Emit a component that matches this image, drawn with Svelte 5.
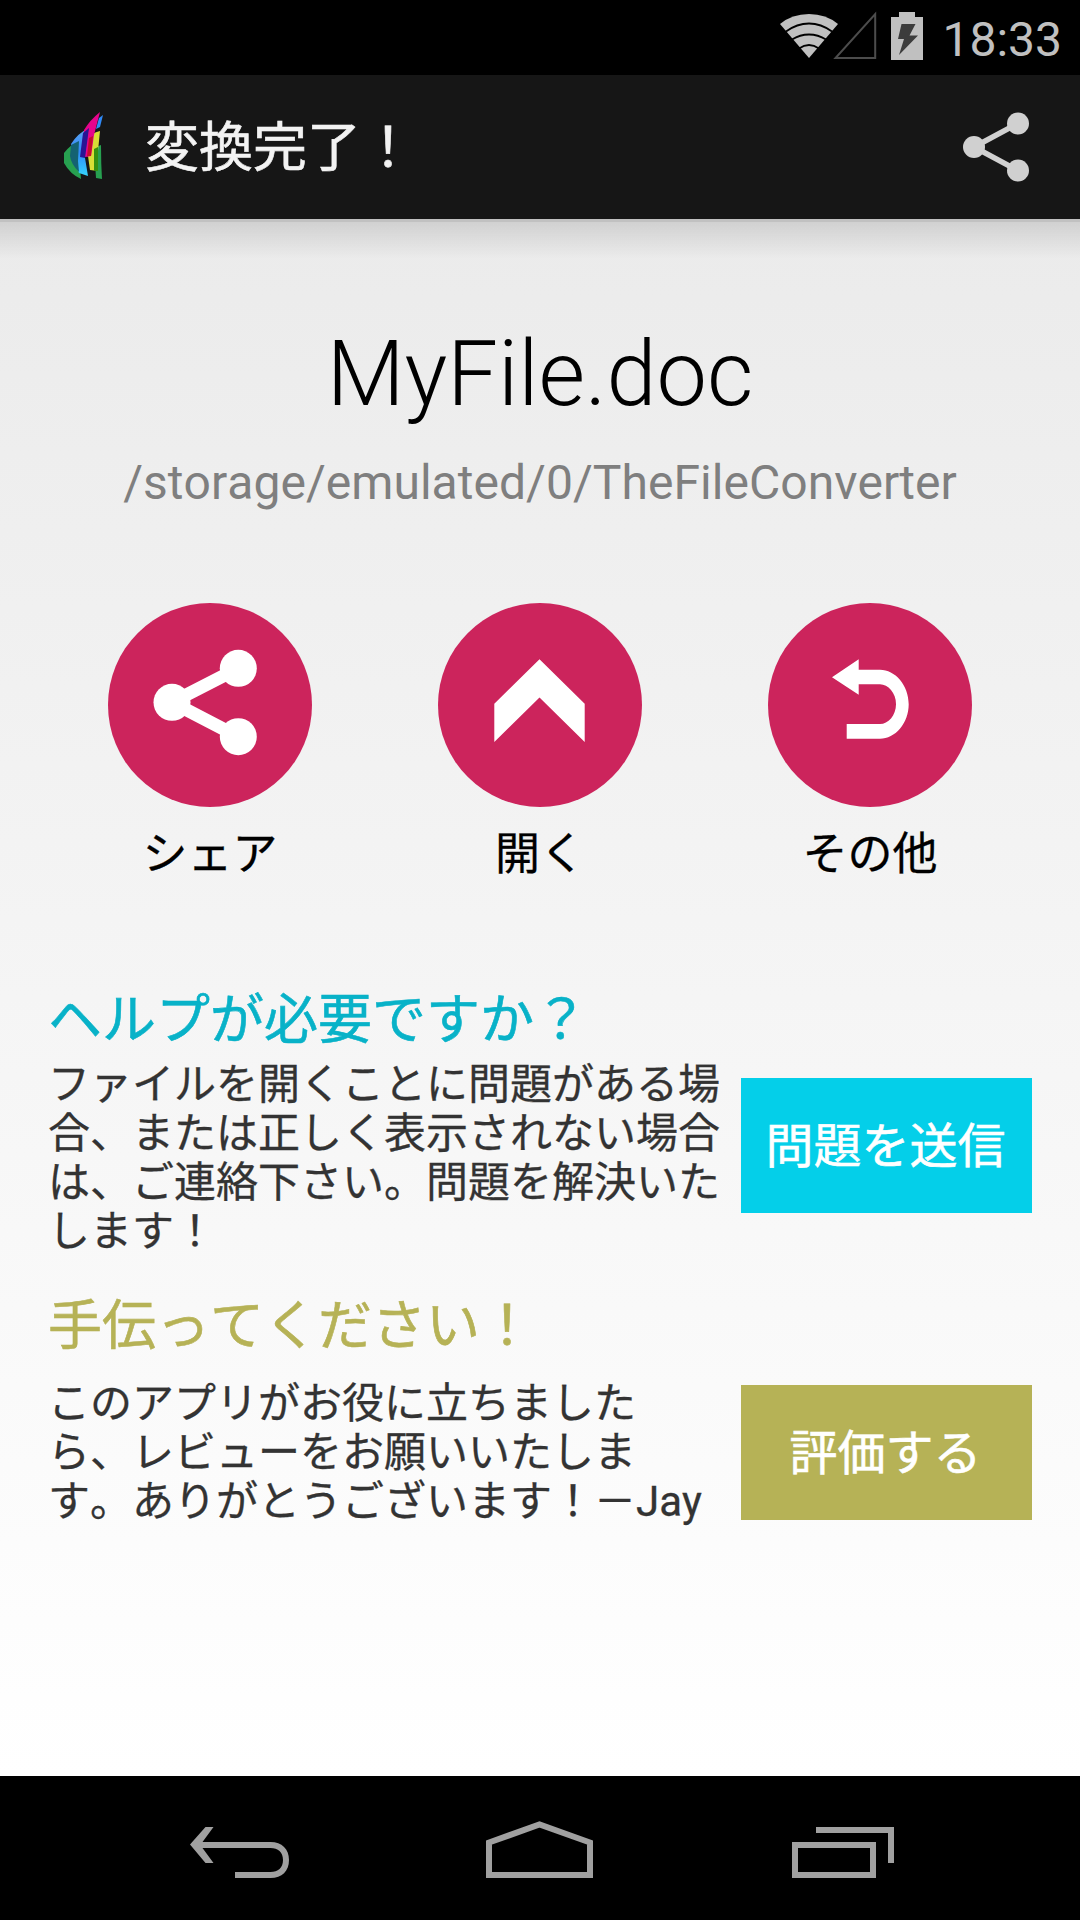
<script lang="ts">
	interface Action {
		id: 'share' | 'open' | 'more';
		label: string;
	}

	interface Section {
		id: string;
		title: string;
		lines: string[];
		button: string;
	}

	const fileName = 'MyFile.doc';
	const filePath = '/storage/emulated/0/TheFileConverter';

	const actions: Action[] = [
		{ id: 'share', label: 'シェア' },
		{ id: 'open', label: '開く' },
		{ id: 'more', label: 'その他' }
	];

	const sections: Section[] = [
		{
			id: 'help',
			title: 'ヘルプが必要ですか？',
			lines: [
				'ファイルを開くことに問題がある場',
				'合、または正しく表示されない場合',
				'は、ご連絡下さい。問題を解決いた',
				'します！'
			],
			button: '問題を送信'
		},
		{
			id: 'rate',
			title: '手伝ってください！',
			lines: [
				'このアプリがお役に立ちました',
				'ら、レビューをお願いいたしま',
				'す。ありがとうございます！－Jay'
			],
			button: '評価する'
		}
	];
</script>

<div class="screen">
	<div class="status">
		<svg class="wifi" width="58" height="44" viewBox="0 0 58 44">
			<path d="M29 44 0 10Q12 0 29 0t29 10z" fill="#c0c0c0" />
			<g fill="none" stroke="#000" stroke-width="1.8">
				<path d="M6 17.500Q17 9.500 29 9.500t23 8" />
				<path d="M12 25.500Q20 20.500 29 20.500t17 5" />
				<path d="M19 34.500Q24 31 29 31t10 3.500" />
			</g>
		</svg>
		<svg class="signal" width="44" height="49" viewBox="0 0 44 49">
			<path d="M2.500 47H42.200V3z" fill="none" stroke="#4c4c4c" stroke-width="2" />
		</svg>
		<svg class="battery" width="32" height="48" viewBox="0 0 32 48">
			<path d="M8 0h16v5h8v43H0V5h8z" fill="#c0c0c0" />
			<path d="M10.500 12h14l-6 11.500h8.500L8 43l5-16H7z" fill="#3c3c3c" />
		</svg>
		<span class="clock">18:33</span>
	</div>

	<header>
		<svg class="logo" width="40" height="68" viewBox="0 0 40 68">
			<defs>
				<linearGradient id="sky" x1="0" y1="0" x2="0" y2="1">
					<stop offset="0" stop-color="#5ea4f2" />
					<stop offset=".5" stop-color="#2f8af8" />
					<stop offset="1" stop-color="#35d4fb" />
				</linearGradient>
			</defs>
			<path d="M1 41Q7 33 16 29v18l2 20Q7 62 1 51z" fill="#27a050" />
			<path d="M8 32Q15 21 26 16L22 46l3 18-9-3-5-12z" fill="url(#sky)" />
			<path d="M8 33l8-4-1 20 1 11Q8 52 7 44z" fill="#146272" />
			<path d="M31 36q4-2 7-3 0 18 1 34l-6-1z" fill="#27a050" />
			<path d="M29 22q4-2 8-3l-2 20v20l-8-1-2-14z" fill="#d8df35" />
			<path d="M31 37l4-2v24h-4z" fill="#36900f" />
			<path d="M21 18Q27 8 37 0L31 23l-3 21q-3 1-8 1z" fill="#e5048c" />
			<path d="M20 21l6-5-4 30-5-1z" fill="#281493" />
			<path d="M26 26l4-2-2 20h-4z" fill="#c40c2b" />
			<path d="M36 6l4-3-3 12-4 2z" fill="#2f8af8" />
		</svg>
		<h1>変換完了！</h1>
		<svg class="share" width="66" height="70" viewBox="0 0 66 70">
			<path d="M55 11.500 11 35l44 23.500" fill="none" stroke="#d0d0d0" stroke-width="5.500" />
			<g fill="#d0d0d0">
				<circle cx="55" cy="11.500" r="11" />
				<circle cx="11" cy="35" r="11" />
				<circle cx="55" cy="58.500" r="11" />
			</g>
		</svg>
	</header>

	<main>
		<h2>{fileName}</h2>
		<p class="path">{filePath}</p>

		<div class="actions">
			{#each actions as action (action.id)}
				<div class="action">
					<svg width="204" height="204" viewBox="0 0 204 204">
						<circle cx="102" cy="102" r="102" fill="#cc245c" />
						{#if action.id === 'share'}
							<path d="M130.300 65.300 64 99.300l66.300 34.400" fill="none" stroke="#fff" stroke-width="13" />
							<g fill="#fff">
								<circle cx="130.300" cy="65.300" r="18.500" />
								<circle cx="64" cy="99.300" r="18.500" />
								<circle cx="130.300" cy="133.700" r="18.500" />
							</g>
						{:else if action.id === 'open'}
							<path d="M56.300 100.700l45.200-44.400 45.200 44.400V139l-45.200-44.500L56.300 139z" fill="#fff" />
						{:else}
							<path
								d="M64 74.300l26.700-18v10.400H112C127 66.700 140.700 82 140.700 101.200S127 135.700 112 135.700H78.700V121H112C120 121 128 112.500 128 101.200S120 81.300 112 81.300H90.700v10.400z"
								fill="#fff"
							/>
						{/if}
					</svg>
					<span>{action.label}</span>
				</div>
			{/each}
		</div>

		{#each sections as section (section.id)}
			<section class={section.id}>
				<h3>{section.title}</h3>
				<div class="row">
					<p>
						{#each section.lines as line}
							<span>{line}</span>
						{/each}
					</p>
					<button>{section.button}</button>
				</div>
			</section>
		{/each}
	</main>

	<nav>
		<svg width="99" height="58" viewBox="0 0 99 58" fill="#a0a0a0">
			<path d="M0 24.500 15.500 7h8L12.500 22H80.500C92 22 99 29 99 40S92 58 80.500 58H45v-6h35.500C88 52 93 48 93 40s-5-12-12.500-12h-68l11 15h-8z" />
		</svg>
		<svg width="109" height="58" viewBox="0 0 109 58">
			<path d="M3 55V22.500L53.500 4.500l50.500 18V55z" fill="none" stroke="#a0a0a0" stroke-width="6" />
		</svg>
		<svg width="102" height="58" viewBox="0 0 102 58" fill="#a0a0a0">
			<path d="M0 22h84v36H0zM6 28v24h72V28z" fill-rule="evenodd" />
			<path d="M24 7h78v36h-6V13H24z" />
		</svg>
	</nav>
</div>

<style>
	:global(body) {
		margin: 0;
		background: #000;
	}
	.screen {
		display: flex;
		flex-direction: column;
		width: 1080px;
		height: 1920px;
		overflow: hidden;
		font-family: Roboto, 'Noto Sans CJK JP', sans-serif;
		font-kerning: none;
	}
	h1,
	h2,
	h3,
	p {
		margin: 0;
		font-weight: 400;
	}
	h1,
	h3,
	button {
		-webkit-text-stroke: 0.6px currentColor;
	}
	svg {
		display: block;
		flex: none;
	}
	.status {
		display: flex;
		align-items: flex-start;
		justify-content: flex-end;
		box-sizing: border-box;
		height: 75px;
		padding-right: 18px;
		background: #000;
	}
	.wifi {
		margin-top: 14px;
	}
	.signal {
		margin: 11px 14px 0 -5px;
	}
	.battery {
		margin-top: 12px;
	}
	.clock {
		margin-left: 19px;
		padding-top: 2px;
		font-size: 48px;
		line-height: 76px;
		color: #c0c0c0;
	}
	header {
		display: flex;
		align-items: center;
		box-sizing: border-box;
		height: 144px;
		padding: 0 51px 0 63px;
		background: #161616;
	}
	.logo {
		margin: -2px 42px 0 0;
	}
	h1 {
		flex: 1;
		padding-top: 4px;
		font-size: 54px;
		line-height: 80px;
		color: #f3f3f3;
	}
	main {
		display: flex;
		flex-direction: column;
		box-sizing: border-box;
		height: 1557px;
		padding: 102px 48px 0;
		background:
			linear-gradient(#c1c1c1 3px, transparent 3px),
			linear-gradient(rgba(0, 0, 0, 0.12), rgba(0, 0, 0, 0) 40px),
			linear-gradient(#ebebeb, #fff);
	}
	h2 {
		font-size: 90px;
		font-weight: 300;
		line-height: 108px;
		text-align: center;
		color: #000;
	}
	.path {
		margin-top: 26px;
		font-size: 48px;
		line-height: 56px;
		letter-spacing: 0.04px;
		text-align: center;
		color: #7f7f7f;
	}
	.actions {
		display: flex;
		justify-content: space-between;
		margin: 92px 60px 0;
	}
	.action {
		display: flex;
		flex-direction: column;
		align-items: center;
		width: 204px;
	}
	.action span {
		margin-top: 18px;
		font-size: 45px;
		line-height: 60px;
		color: #000;
		-webkit-text-stroke: 0.3px currentColor;
	}
	section h3 {
		font-size: 54px;
		line-height: 72px;
	}
	.row {
		display: flex;
		align-items: center;
		justify-content: space-between;
		height: 196px;
	}
	.row p {
		width: 672px;
		font-size: 42px;
		line-height: 49px;
		color: #333;
		-webkit-text-stroke: 0.3px currentColor;
	}
	.row p span {
		display: block;
		white-space: nowrap;
	}
	button {
		flex: none;
		box-sizing: border-box;
		width: 291px;
		height: 135px;
		padding: 0 2px 7px 0;
		border: 0;
		font-family: inherit;
		font-size: 48px;
		font-kerning: none;
		color: #fff;
	}
	.help {
		margin-top: 100px;
	}
	.help h3 {
		color: #08b2c8;
	}
	.help .row {
		margin-top: 3px;
	}
	.help button {
		margin-top: -25px;
		background: #04cfe9;
	}
	.rate {
		margin-top: 35px;
	}
	.rate h3 {
		color: #b6b256;
	}
	.rate .row {
		margin-top: -9px;
	}
	.rate button {
		background: #b6b256;
	}
	nav {
		display: flex;
		justify-content: space-between;
		box-sizing: border-box;
		height: 144px;
		padding: 44px 186px 0 190px;
		background: #000;
	}
</style>
